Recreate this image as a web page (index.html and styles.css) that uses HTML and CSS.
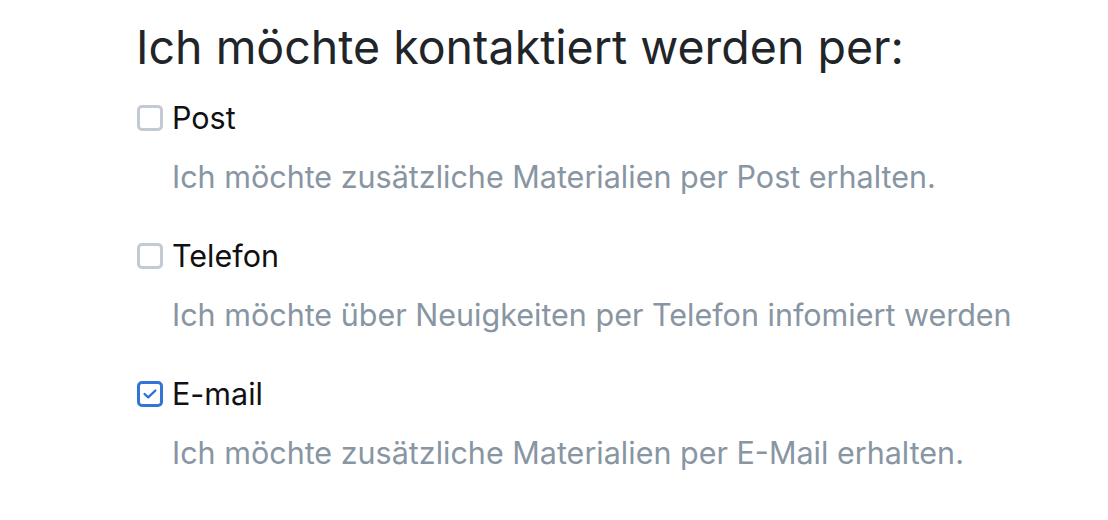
FILE: index.html
```html
<!DOCTYPE html>
<html lang="de">
<head>
<meta charset="utf-8">
<link rel="stylesheet" href="styles.css">
</head>
<body>
<main class="form">
  <h1 class="title">Ich möchte kontaktiert werden per:</h1>
  <div class="option">
    <label class="check">
      <span class="box"></span>
      <span class="label">Post</span>
    </label>
    <p class="hint">Ich möchte zusätzliche Materialien per Post erhalten.</p>
  </div>
  <div class="option">
    <label class="check">
      <span class="box"></span>
      <span class="label">Telefon</span>
    </label>
    <p class="hint">Ich möchte über Neuigkeiten per Telefon infomiert werden</p>
  </div>
  <div class="option">
    <label class="check">
      <span class="box checked">
        <svg viewBox="0 0 24 24" width="22" height="22"><path d="M5.5 12l4.3 4L18.5 7.8" fill="none" stroke="#2f6fd0" stroke-width="2.8" stroke-linecap="round" stroke-linejoin="round"/></svg>
      </span>
      <span class="label">E-mail</span>
    </label>
    <p class="hint">Ich möchte zusätzliche Materialien per E-Mail erhalten.</p>
  </div>
</main>
</body>
</html>
```

FILE: styles.css
```css
html, body {
  margin: 0;
  padding: 0;
  background: #ffffff;
}
body {
  font-family: Inter, "Noto Sans", "Liberation Sans", sans-serif;
}
.form {
  padding: 22px 0 0 136px;
  display: flex;
  flex-direction: column;
}
.title {
  margin: 0 0 27px 0;
  font-size: 46.5px;
  font-weight: 400;
  line-height: 50px;
  color: #212529;
  letter-spacing: 0;
}
.option {
  display: flex;
  flex-direction: column;
  margin-bottom: 40px;
}
.check {
  display: flex;
  align-items: center;
  gap: 9px;
  height: 38px;
}
.box {
  box-sizing: border-box;
  width: 26px;
  height: 26px;
  border: 3px solid #c2cad3;
  border-radius: 5px;
  display: flex;
  align-items: center;
  justify-content: center;
  margin-left: 1px;
}
.box.checked {
  border-color: #3574d4;
}
.label {
  font-size: 30.5px;
  color: #111111;
  line-height: 38px;
}
.hint {
  margin: 20px 0 0 36px;
  font-size: 30.5px;
  line-height: 40px;
  color: #8895a2;
}
```
